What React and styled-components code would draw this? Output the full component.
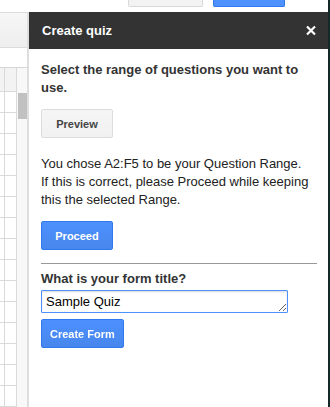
import React from "react";
import styled, { createGlobalStyle } from "styled-components";

const GlobalStyle = createGlobalStyle`
  html, body {
    margin: 0;
    padding: 0;
    background: #fff;
    overflow: hidden;
  }
  body {
    font-family: "Liberation Sans", Arial, sans-serif;
    font-size: 13px;
    color: #333;
  }
`;

const Screen = styled.div`
  display: flex;
  width: 330px;
  height: 407px;
  overflow: hidden;
`;

const Content = styled.div`
  flex: 1;
  display: flex;
  flex-direction: column;
  min-width: 0;
`;

const EdgeLine = styled.div`
  width: 2px;
  background: #15282a;
`;

const TopStrip = styled.div`
  height: 12px;
  display: flex;
  align-items: flex-start;
  gap: 10px;
  padding-left: 128px;
`;

const StubButton = styled.div`
  box-sizing: border-box;
  height: 7px;
  width: ${(p) => p.$w}px;
  border-radius: 0 0 2px 2px;
  border: 1px solid ${(p) => (p.$primary ? "#3079ed" : "#d9d9d9")};
  border-top: none;
  background: ${(p) => (p.$primary ? "#4d90fe" : "#f3f3f3")};
`;

const Main = styled.div`
  flex: 1;
  display: flex;
  min-height: 0;
`;

/* spreadsheet fragment on the left */
const Sheet = styled.div`
  width: 27px;
  border-right: 2px solid #dedede;
  display: flex;
  flex-direction: column;
`;

const SheetToolbar = styled.div`
  height: 36px;
  border-top: 1px solid #dcdcdc;
  border-bottom: 1px solid #dcdcdc;
  background: linear-gradient(#f6f6f6, #eeeeee);
`;

const FormulaBar = styled.div`
  height: 20px;
  background: #fff;
`;

const GridArea = styled.div`
  flex: 1;
  display: flex;
  border-top: 1px solid #d6d6d6;
`;

const Cells = styled.div`
  display: flex;
  flex-direction: column;
`;

const GridRow = styled.div`
  display: flex;
  height: ${(p) => (p.$header ? 23 : 20)}px;
  border-bottom: 1px solid #dadada;
  background: ${(p) => (p.$header ? "#f3f3f3" : "#fff")};
`;

const Cell = styled.div`
  width: ${(p) => p.$w}px;
  border-right: 1px solid #dadada;
`;

const ScrollTrack = styled.div`
  width: 10px;
  background: #f8f8f8;
  padding: 25px 0 0 1px;
`;

const ScrollThumb = styled.div`
  width: 9px;
  height: 26px;
  background: #c1c1c1;
`;

/* sidebar */
const Panel = styled.div`
  flex: 1;
  display: flex;
  flex-direction: column;
  background: #fff;
`;

const PanelHeader = styled.div`
  height: 37px;
  background: #333;
  display: flex;
  align-items: center;
  justify-content: space-between;
  padding: 0 12px 0 13px;
`;

const PanelTitle = styled.div`
  color: #fff;
  font-weight: bold;
  font-size: 13px;
`;

const CloseIcon = styled.svg`
  width: 10px;
  height: 11px;
  display: block;
`;

const PanelBody = styled.div`
  padding: 12px 11px 0 12px;
  display: flex;
  flex-direction: column;
  align-items: flex-start;
`;

const Prompt = styled.div`
  font-weight: bold;
  line-height: 18px;
  color: #333;
`;

const Message = styled.p`
  margin: 17px 0 0;
  line-height: 18px;
  color: #222;
`;

const Button = styled.button`
  box-sizing: border-box;
  height: 29px;
  min-width: 72px;
  padding: 0 8px;
  margin-top: ${(p) => p.$mt}px;
  border-radius: 2px;
  font-family: "Liberation Sans", Arial, sans-serif;
  font-size: 11px;
  font-weight: bold;
  cursor: pointer;
  border: 1px solid ${(p) => (p.$primary ? "#3079ed" : "#dcdcdc")};
  background: ${(p) =>
    p.$primary ? "linear-gradient(#4d90fe, #4787ed)" : "linear-gradient(#f5f5f5, #f1f1f1)"};
  color: ${(p) => (p.$primary ? "#fff" : "#444")};
`;

const Divider = styled.hr`
  align-self: stretch;
  margin: 13px 0 6px;
  border: none;
  border-top: 1px solid #999;
`;

const TitleInput = styled.textarea`
  box-sizing: border-box;
  width: 247px;
  height: 23px;
  margin-top: 2px;
  padding: 3px 4px;
  border: 1px solid #4d90fe;
  border-radius: 1px;
  outline: none;
  font-family: "Liberation Sans", Arial, sans-serif;
  font-size: 13px;
  line-height: 15px;
  color: #000;
  box-shadow: inset 0 1px 2px rgba(0, 0, 0, 0.15);
`;

const rows = Array.from({ length: 15 });

export default function App() {
  return (
    <Screen>
      <GlobalStyle />
      <Content>
        <TopStrip>
          <StubButton $w={75} />
          <StubButton $w={72} $primary />
        </TopStrip>
        <Main>
          <Sheet>
            <SheetToolbar />
            <FormulaBar />
            <GridArea>
              <Cells>
                <GridRow $header>
                  <Cell $w={4} />
                  <Cell $w={11} />
                </GridRow>
                {rows.map((_, i) => (
                  <GridRow key={i}>
                    <Cell $w={4} />
                    <Cell $w={11} />
                  </GridRow>
                ))}
              </Cells>
              <ScrollTrack>
                <ScrollThumb />
              </ScrollTrack>
            </GridArea>
          </Sheet>
          <Panel>
            <PanelHeader>
              <PanelTitle>Create quiz</PanelTitle>
              <CloseIcon viewBox="0 0 10 11">
                <path d="M1 1.5 L9 9.5 M9 1.5 L1 9.5" stroke="#fff" strokeWidth="2.2" />
              </CloseIcon>
            </PanelHeader>
            <PanelBody>
              <Prompt>Select the range of questions you want to use.</Prompt>
              <Button $mt={12}>Preview</Button>
              <Message>
                You chose A2:F5 to be your Question Range.
                <br />
                If this is correct, please Proceed while keeping this the selected Range.
              </Message>
              <Button $mt={12} $primary>Proceed</Button>
              <Divider />
              <Prompt>What is your form title?</Prompt>
              <TitleInput defaultValue="Sample Quiz" autoFocus />
              <Button $mt={6} $primary>Create Form</Button>
            </PanelBody>
          </Panel>
        </Main>
      </Content>
      <EdgeLine />
    </Screen>
  );
}
